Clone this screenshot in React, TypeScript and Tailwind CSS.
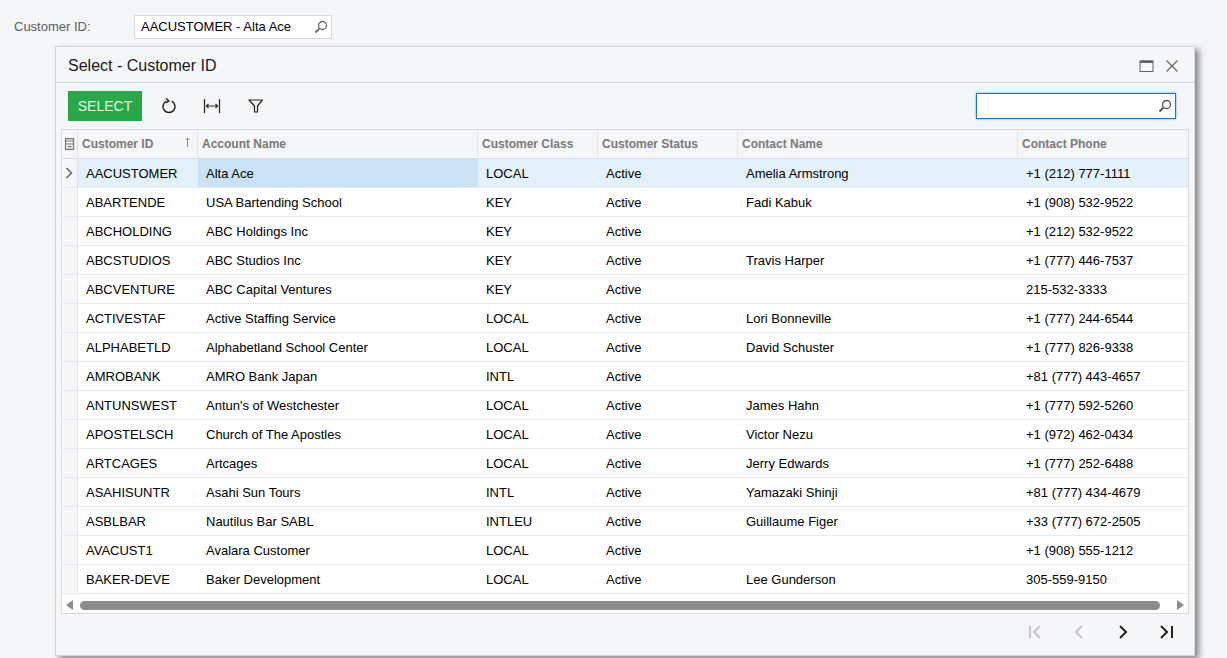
const rows = [
  ['AACUSTOMER', 'Alta Ace', 'LOCAL', 'Active', 'Amelia Armstrong', '+1 (212) 777-1111'],
  ['ABARTENDE', 'USA Bartending School', 'KEY', 'Active', 'Fadi Kabuk', '+1 (908) 532-9522'],
  ['ABCHOLDING', 'ABC Holdings Inc', 'KEY', 'Active', '', '+1 (212) 532-9522'],
  ['ABCSTUDIOS', 'ABC Studios Inc', 'KEY', 'Active', 'Travis Harper', '+1 (777) 446-7537'],
  ['ABCVENTURE', 'ABC Capital Ventures', 'KEY', 'Active', '', '215-532-3333'],
  ['ACTIVESTAF', 'Active Staffing Service', 'LOCAL', 'Active', 'Lori Bonneville', '+1 (777) 244-6544'],
  ['ALPHABETLD', 'Alphabetland School Center', 'LOCAL', 'Active', 'David Schuster', '+1 (777) 826-9338'],
  ['AMROBANK', 'AMRO Bank Japan', 'INTL', 'Active', '', '+81 (777) 443-4657'],
  ['ANTUNSWEST', "Antun's of Westchester", 'LOCAL', 'Active', 'James Hahn', '+1 (777) 592-5260'],
  ['APOSTELSCH', 'Church of The Apostles', 'LOCAL', 'Active', 'Victor Nezu', '+1 (972) 462-0434'],
  ['ARTCAGES', 'Artcages', 'LOCAL', 'Active', 'Jerry Edwards', '+1 (777) 252-6488'],
  ['ASAHISUNTR', 'Asahi Sun Tours', 'INTL', 'Active', 'Yamazaki Shinji', '+81 (777) 434-4679'],
  ['ASBLBAR', 'Nautilus Bar SABL', 'INTLEU', 'Active', 'Guillaume Figer', '+33 (777) 672-2505'],
  ['AVACUST1', 'Avalara Customer', 'LOCAL', 'Active', '', '+1 (908) 555-1212'],
  ['BAKER-DEVE', 'Baker Development', 'LOCAL', 'Active', 'Lee Gunderson', '305-559-9150'],
];

const columns = 'grid grid-cols-[16px_120px_280px_120px_140px_280px_170px]';
const headers = ['Account Name', 'Customer Class', 'Customer Status', 'Contact Name', 'Contact Phone'];

const Search = ({ color }: { color: string }) => (
  <svg width="14" height="14" viewBox="0 0 14 14" fill="none" stroke={color}>
    <circle cx="8.5" cy="5.5" r="4" strokeWidth="1.3" />
    <path d="M5.6 8.4 1.5 12.5" strokeWidth="2" />
  </svg>
);

const Chevron = ({ d, color }: { d: string; color: string }) => (
  <svg width="16" height="16" viewBox="0 0 16 16" fill="none" stroke={color} strokeWidth="2">
    <path d={d} />
  </svg>
);

export default function App() {
  return (
    <div className="h-[658px] overflow-hidden bg-[#f5f6f8] font-['Liberation_Sans',sans-serif] text-[13px] text-black">
      <div className="flex h-[46px] items-start pt-[15px]">
        <label className="ml-[14px] w-[120px] pt-[2px] text-[#5c5c5c]">Customer ID:</label>
        <div className="flex h-[24px] w-[198px] items-center justify-between border border-[#d5d8dc] bg-white pl-[6px] pr-[3px]">
          <span>AACUSTOMER - Alta Ace</span>
          <Search color="#6b6b6b" />
        </div>
      </div>

      <div className="ml-[55px] flex h-[610px] w-[1140px] flex-col border border-[#d2d4d6] bg-[#f5f6f8] shadow-[4px_3px_6px_rgba(0,0,0,0.45)]">
        <div className="flex h-[36px] shrink-0 items-center justify-between border-b border-[#d2d4d6] pl-[12px] pr-[15px] pt-[2px]">
          <span className="text-[16px] text-[#1a1a1a]">Select - Customer ID</span>
          <div className="flex items-center gap-[10px]">
            <svg width="16" height="14" viewBox="0 0 16 14" fill="none">
              <rect x="1" y="2" width="13" height="10.5" stroke="#5f6368" />
              <rect x="1" y="1.5" width="13" height="2.5" fill="#5f6368" />
            </svg>
            <svg width="14" height="14" viewBox="0 0 14 14" fill="none" stroke="#666" strokeWidth="1.2">
              <path d="M1.5 1.5 12.5 12.5M12.5 1.5 1.5 12.5" />
            </svg>
          </div>
        </div>

        <div className="flex h-[46px] shrink-0 items-center justify-between pl-[12px] pr-[18px]">
          <div className="flex items-center">
            <button className="flex h-[30px] w-[74px] items-center justify-center bg-[#29a84a] text-[14px] text-[#e4f5e8]">
              SELECT
            </button>
            <svg className="ml-[18px]" width="18" height="18" viewBox="0 0 18 18" fill="none" stroke="#222" strokeWidth="1.5">
              <path d="M6.3 4.2a6 6 0 1 0 5.4 0" />
              <path d="M6 1.5 8.8 4 6 6" />
            </svg>
            <svg className="ml-[25px]" width="18" height="14" viewBox="0 0 18 14" fill="none" stroke="#222" strokeWidth="1.2">
              <path d="M1.5 0v14M16.5 0v14M3.5 7h11" />
              <path d="M5.5 5 3.5 7l2 2M12.5 5l2 2-2 2" />
            </svg>
            <svg className="ml-[27px]" width="16" height="14" viewBox="0 0 16 14" fill="none" stroke="#222" strokeWidth="1.2">
              <path d="M1 1h13.5L9.5 7v6H6.5V7z" strokeLinejoin="round" />
            </svg>
          </div>
          <div className="flex h-[26px] w-[200px] items-center justify-end border border-[#1a78bd] bg-white pr-[3px] shadow-[0_0_2px_#4f9fd8]">
            <Search color="#555" />
          </div>
        </div>

        <div className="mx-[5px] flex h-[485px] w-[1128px] shrink-0 flex-col overflow-hidden border border-[#d8dadd] bg-white">
          <div className={`${columns} h-[29px] shrink-0 border-b border-[#d8dadd] bg-[#f5f6f8] text-[12px] font-bold text-[#7a7a7a]`}>
            <div className="flex items-center justify-center border-r border-[#e2e4e7]">
              <svg width="11" height="12" viewBox="0 0 11 12" fill="none" stroke="#777" strokeWidth="1.2">
                <path d="M1.5 3V.6h8V3M1.5 3h8v3h-8zM1.5 6v5.4h8V6M3.5 8.7h4" />
              </svg>
            </div>
            <div className="relative flex items-center border-r border-[#e2e4e7] pl-[4px]">
              Customer ID
              <svg className="absolute right-[6px] top-[7px]" width="7" height="10" viewBox="0 0 7 10" fill="none" stroke="#888">
                <path d="M3.5 10V1M1.5 3l2-2 2 2" />
              </svg>
            </div>
            {headers.map((name, index) => (
              <div
                key={name}
                className={`flex items-center pl-[4px] ${index < headers.length - 1 ? 'border-r border-[#e2e4e7]' : ''}`}
              >
                {name}
              </div>
            ))}
          </div>

          {rows.map((row, rowIndex) => (
            <div
              key={row[0]}
              className={`${columns} h-[29px] shrink-0 border-b border-[#e6ebf0] ${rowIndex === 0 ? 'bg-[#e4f1fa]' : 'bg-white'}`}
            >
              <div className="flex items-center justify-center border-r border-[#dfe1e4] bg-[#f5f6f8]">
                {rowIndex === 0 && (
                  <svg className="mr-[2px]" width="8" height="12" viewBox="0 0 8 12" fill="none" stroke="#666" strokeWidth="1.5">
                    <path d="M1.5 1 6.5 6l-5 5" />
                  </svg>
                )}
              </div>
              {row.map((cell, cellIndex) => (
                <div
                  key={cellIndex}
                  className={`flex items-center pl-[8px] pt-[1px] ${rowIndex === 0 && cellIndex === 1 ? 'bg-[#cbe2f5]' : ''}`}
                >
                  {cell}
                </div>
              ))}
            </div>
          ))}

          <div className="flex h-[19px] shrink-0 items-center px-[4px] pt-[3px]">
            <svg width="8" height="10" viewBox="0 0 8 10" fill="#8a8a8a">
              <path d="M7 0v10L0 5z" />
            </svg>
            <div className="ml-[6px] h-[9px] w-[1080px] rounded-full bg-[#8c8c8c]" />
            <svg className="ml-[16px]" width="8" height="10" viewBox="0 0 8 10" fill="#8a8a8a">
              <path d="M1 0v10l7-5z" />
            </svg>
          </div>
        </div>

        <div className="flex flex-1 items-center justify-end gap-[28px] pb-[5px] pr-[19px]">
          <Chevron color="#c4c6c9" d="M3 2v12M13 2 7 8l6 6" />
          <Chevron color="#c4c6c9" d="M11 2 5 8l6 6" />
          <Chevron color="#222" d="m5 2 6 6-6 6" />
          <Chevron color="#222" d="m2 2 6 6-6 6M13 2v12" />
        </div>
      </div>
    </div>
  );
}
